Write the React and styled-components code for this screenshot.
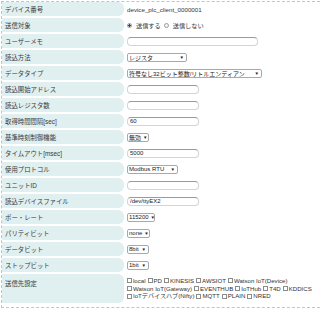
import React from 'react';
import styled, { createGlobalStyle } from 'styled-components';

const GlobalStyle = createGlobalStyle`
  html, body {
    margin: 0;
    padding: 0;
    background: #ffffff;
    overflow: hidden;
  }
  body {
    font-family: "Liberation Sans", "Noto Sans CJK JP", sans-serif;
    color: #333333;
  }
`;

// outer dashed frame around the settings table (right edge runs off the page)
const Frame = styled.div`
  box-sizing: border-box;
  margin: 1px 0 0 1px;
  width: calc(100% - 1px);
  border: 1px dashed #c4c4c4;
  border-right: none;
  padding-bottom: 4px;
  display: flex;
  flex-direction: column;
  gap: 2px;
`;

const Row = styled.div`
  display: flex;
  align-items: stretch;
  min-height: 14px;
`;

const Label = styled.div`
  width: 119px;
  flex-shrink: 0;
  background: #e0efef;
  border-radius: 0 6px 6px 0;
  padding: 0 0 0 3px;
  font-size: 6.4px;
  color: #3a3a3a;
  display: flex;
  align-items: ${(p) => (p.$top ? 'flex-start' : 'center')};
  padding-top: ${(p) => (p.$top ? '5px' : '0')};
`;

const Value = styled.div`
  flex: 1;
  min-width: 0;
  padding-left: 3px;
  display: flex;
  align-items: center;
  font-size: 6.2px;
  color: #333;
`;

const TextInput = styled.input`
  box-sizing: border-box;
  width: ${(p) => p.$w || 72}px;
  height: 9px;
  border: 1px solid #d4d4d4;
  border-top-color: #9a9a9a;
  border-radius: 4px;
  padding: 0 2px;
  font-family: "Liberation Sans", sans-serif;
  font-size: 6px;
  color: #222;
  outline: none;
  margin: 0;
`;

const SelectBox = styled.div`
  box-sizing: border-box;
  width: ${(p) => p.$w}px;
  height: 9px;
  border: 1px solid #a9a9a9;
  border-radius: 2px;
  display: flex;
  align-items: center;
  justify-content: space-between;
  padding: 0 2px 0 1px;
  font-size: 6px;
  color: #222;
  background: #fff;
  white-space: nowrap;
`;

const Arrow = styled.span`
  font-size: 4.5px;
  color: #222;
  margin-left: 2px;
`;

const RadioGroup = styled.div`
  display: flex;
  align-items: center;
  gap: 3px;
`;

const Radio = styled.span`
  box-sizing: border-box;
  width: 5px;
  height: 5px;
  border-radius: 50%;
  border: 1px solid #9a9a9a;
  background: ${(p) => (p.$on ? 'radial-gradient(circle, #444 0 1.2px, #fff 1.4px)' : '#f4f4f4')};
  margin-right: 1px;
`;

const Targets = styled.div`
  display: flex;
  flex-direction: column;
  padding: 3px 0 3px;
  font-size: 6.1px;
  line-height: 7.7px;
`;

const TargetLine = styled.div`
  display: flex;
  align-items: center;
  white-space: nowrap;
`;

const Check = styled.span`
  box-sizing: border-box;
  display: inline-block;
  width: 5px;
  height: 5px;
  border: 1px solid #8c8c8c;
  background: #fff;
  margin: 0 1px 0 2px;
  &:first-child {
    margin-left: 0;
  }
`;

const targetLines = [
  ['local', 'PD', 'KINESIS', 'AWSIOT', 'Watson IoT(Device)'],
  ['Watson IoT(Gateway)', 'EVENTHUB', 'IoTHub', 'T4D', 'KDDICS'],
  ['IoTデバイスハブ(Nifty)', 'MQTT', 'PLAIN', 'NRED'],
];

const Select = ({ w, text }) => (
  <SelectBox $w={w}>
    <span>{text}</span>
    <Arrow>▼</Arrow>
  </SelectBox>
);

const fields = [
  { label: 'デバイス番号', value: 'device_plc_client_0000001' },
  {
    label: '送信対象',
    node: (
      <RadioGroup>
        <Radio $on />
        <span>送信する</span>
        <Radio />
        <span>送信しない</span>
      </RadioGroup>
    ),
  },
  { label: 'ユーザーメモ', node: <TextInput $w={131} readOnly value="" /> },
  { label: '読込方法', node: <Select w={60} text="レジスタ" /> },
  { label: 'データタイプ', node: <Select w={135} text="符号なし32ビット整数/リトルエンディアン" /> },
  { label: '読込開始アドレス', node: <TextInput readOnly value="" /> },
  { label: '読込レジスタ数', node: <TextInput readOnly value="" /> },
  { label: '取得時間間隔[sec]', node: <TextInput readOnly value="60" /> },
  { label: '基準時刻制御機能', node: <Select w={22} text="無効" /> },
  { label: 'タイムアウト[msec]', node: <TextInput readOnly value="5000" /> },
  { label: '使用プロトコル', node: <Select w={51} text="Modbus RTU" /> },
  { label: 'ユニットID', node: <TextInput readOnly value="" /> },
  { label: '読込デバイスファイル', node: <TextInput readOnly value="/dev/ttyEX2" /> },
  { label: 'ボー・レート', node: <Select w={28} text="115200" /> },
  { label: 'パリティビット', node: <Select w={23} text="none" /> },
  { label: 'データビット', node: <Select w={22} text="8bit" /> },
  { label: 'ストップビット', node: <Select w={22} text="1bit" /> },
];

export default function App() {
  return (
    <>
      <GlobalStyle />
      <Frame>
        {fields.map((f) => (
          <Row key={f.label}>
            <Label>{f.label}</Label>
            <Value>{f.node || f.value}</Value>
          </Row>
        ))}
        <Row>
          <Label $top>送信先設定</Label>
          <Value>
            <Targets>
              {targetLines.map((line, i) => (
                <TargetLine key={i}>
                  {line.map((t) => (
                    <React.Fragment key={t}>
                      <Check />
                      <span>{t}</span>
                    </React.Fragment>
                  ))}
                </TargetLine>
              ))}
            </Targets>
          </Value>
        </Row>
      </Frame>
    </>
  );
}
